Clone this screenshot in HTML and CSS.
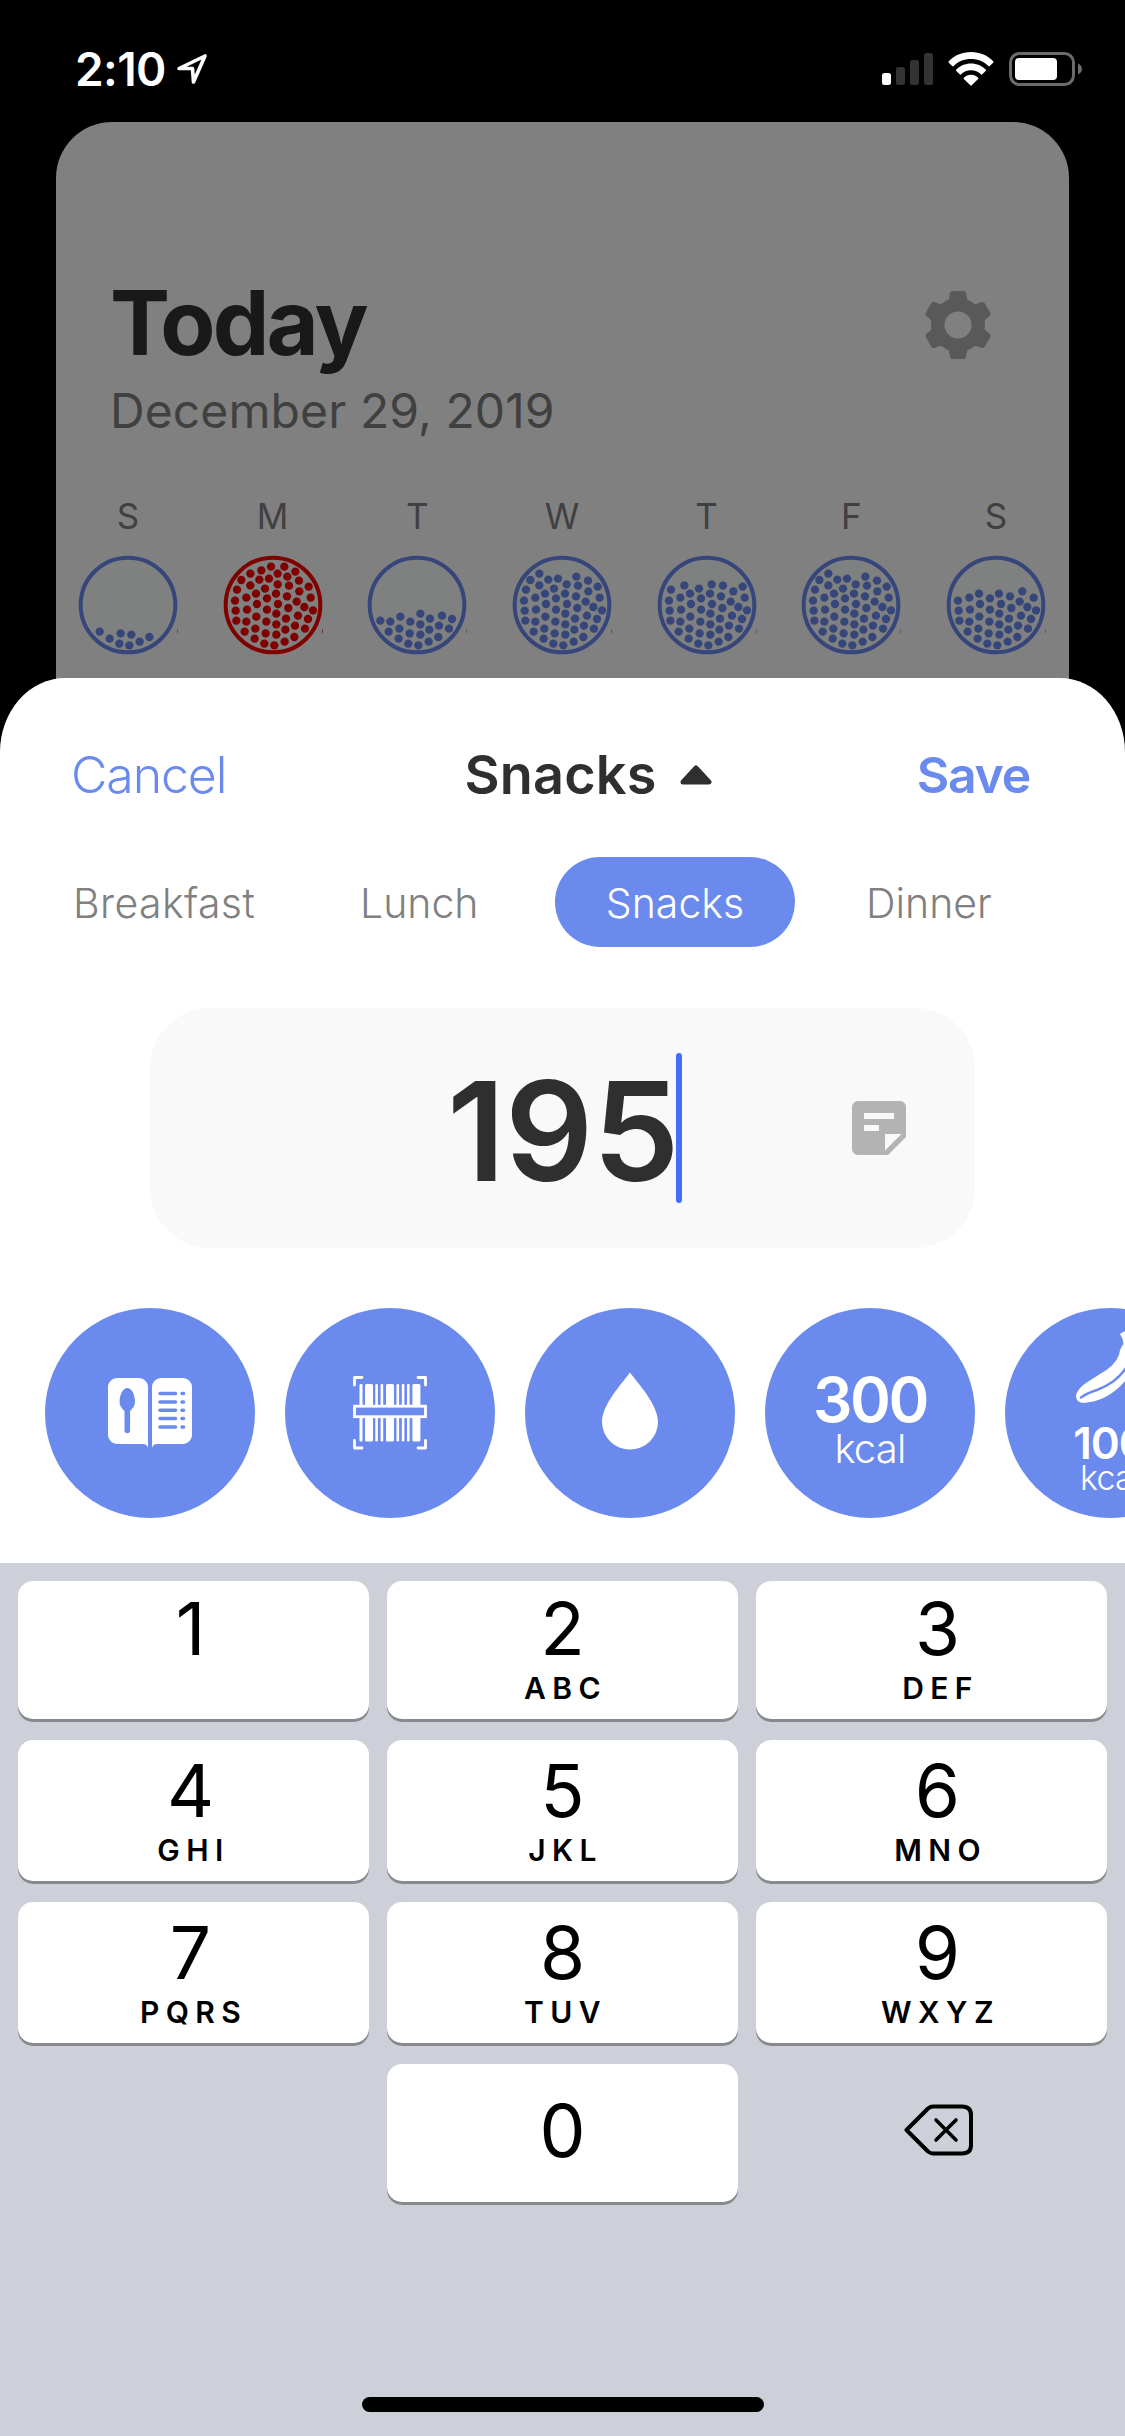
FILE: index.html
```html
<!DOCTYPE html>
<html lang="en">
<head>
<meta charset="utf-8">
<title>Add snack</title>
<link rel="stylesheet" href="styles.css">
</head>
<body>
<svg class="defs" aria-hidden="true">
  <defs>
    <g id="level-1">
      <circle cx="-85" cy="80" r="12.5"/><circle cx="-55" cy="101" r="12.5"/><circle cx="-22" cy="85" r="12.5"/><circle cx="10" cy="89" r="12.5"/><circle cx="64" cy="96" r="12.5"/><circle cx="35" cy="110" r="12.5"/><circle cx="-26" cy="116" r="12.5"/><circle cx="4" cy="121" r="12.5"/>
    </g>
    <g id="level-2">
      <use href="#level-1"/>
      <circle cx="-110" cy="47" r="12.5"/><circle cx="-80" cy="50" r="12.5"/><circle cx="-50" cy="35" r="12.5"/><circle cx="-20" cy="50" r="12.5"/><circle cx="10" cy="26" r="12.5"/><circle cx="39" cy="41" r="12.5"/><circle cx="75" cy="32" r="12.5"/><circle cx="105" cy="42" r="12.5"/><circle cx="10" cy="58" r="12.5"/><circle cx="66" cy="62" r="12.5"/><circle cx="96" cy="71" r="12.5"/><circle cx="37" cy="74" r="12.5"/><circle cx="-53" cy="71" r="12.5"/>
    </g>
    <g id="level-3">
      <use href="#level-2"/>
      <circle cx="-51" cy="-34" r="12.5"/><circle cx="9" cy="-34" r="12.5"/><circle cx="-80" cy="-22" r="12.5"/><circle cx="-18" cy="-20" r="12.5"/><circle cx="42" cy="-26" r="12.5"/><circle cx="113" cy="-22" r="12.5"/><circle cx="-114" cy="-13" r="12.5"/><circle cx="71" cy="-10" r="12.5"/><circle cx="-48" cy="-3" r="12.5"/><circle cx="15" cy="-3" r="12.5"/><circle cx="94" cy="6" r="12.5"/><circle cx="46" cy="9" r="12.5"/><circle cx="-112" cy="17" r="12.5"/><circle cx="-78" cy="14" r="12.5"/><circle cx="-18" cy="14" r="12.5"/><circle cx="120" cy="16" r="12.5"/><circle cx="79" cy="-41" r="12.5"/>
    </g>
    <g id="level-4">
      <use href="#level-3"/>
      <circle cx="-108" cy="-46" r="12.5"/><circle cx="-68" cy="-59" r="12.5"/><circle cx="-24" cy="-49" r="12.5"/><circle cx="14" cy="-62" r="12.5"/><circle cx="48" cy="-58" r="12.5"/><circle cx="107" cy="-55" r="12.5"/>
    </g>
    <g id="level-5">
      <use href="#level-4"/>
      <circle cx="-68" cy="-94" r="12.5"/><circle cx="-95" cy="-75" r="12.5"/><circle cx="-41" cy="-76" r="12.5"/><circle cx="-12" cy="-79" r="12.5"/><circle cx="43" cy="-85" r="12.5"/><circle cx="78" cy="-73" r="12.5"/>
    </g>
    <g id="level-6">
      <use href="#level-5"/>
      <circle cx="-6" cy="-115" r="12.5"/><circle cx="34" cy="-115" r="12.5"/><circle cx="-35" cy="-104" r="12.5"/><circle cx="67" cy="-100" r="12.5"/><circle cx="14" cy="-94" r="12.5"/>
    </g>
    <g id="ring">
      <circle class="ring-line" r="142"/>
      <path d="M147 73h2v11h-2z"/>
    </g>
    <path id="tooth" d="M-9.500-24-8-32Q-7.600-34-5.500-34H5.500Q7.600-34 8-32L9.500-24 13-18H-13Z"/>
  </defs>
</svg>

<header class="status">
  <div class="status-left">
    <span class="clock">2:10</span>
    <svg class="location" viewBox="0 0 32 32"><path d="M3 15.500 29 3 17.500 29 16.500 15.500Z" fill="none" stroke="#fff" stroke-width="3.600" stroke-linejoin="round"/></svg>
  </div>
  <div class="status-right">
    <svg width="51" height="34" viewBox="0 0 51 34"><rect x="0" y="21" width="9" height="12" rx="2.500" fill="#fff"/><g fill="#333"><rect x="14" y="15" width="9" height="18" rx="2.500"/><rect x="28" y="8" width="9" height="25" rx="2.500"/><rect x="42" y="1" width="9" height="32" rx="2.500"/></g></svg>
    <svg width="46" height="34" viewBox="0 0 46 34" fill="#fff"><path d="M23 0C14 0 6 3.500.8 9.300a1 1 0 0 0 0 1.400l3.400 3.400a1 1 0 0 0 1.400 0C10 9.500 16 7 23 7s13 2.500 17.400 7.100a1 1 0 0 0 1.400 0l3.400-3.400a1 1 0 0 0 0-1.400C40 3.500 32 0 23 0Z"/><path d="M23 11.500c-5.700 0-11 2.200-14.700 6a1 1 0 0 0 0 1.400l3.400 3.400a1 1 0 0 0 1.400 0c2.600-2.500 6-4 9.900-4s7.300 1.500 9.900 4a1 1 0 0 0 1.400 0l3.400-3.400a1 1 0 0 0 0-1.400c-3.700-3.800-9-6-14.700-6Z"/><path d="M23 22.800c-2.800 0-5.300 1.100-7.100 2.900a1 1 0 0 0 0 1.400l6.400 6.200a1 1 0 0 0 1.400 0l6.400-6.200a1 1 0 0 0 0-1.400c-1.800-1.800-4.300-2.900-7.100-2.900Z"/></svg>
    <svg width="73" height="34" viewBox="0 0 73 34"><rect x="1.500" y="1.500" width="63" height="31" rx="9" fill="none" stroke="#6b6b6b" stroke-width="3"/><rect x="6" y="6" width="42" height="22" rx="4" fill="#fff"/><path d="M69 11.500c2.500 1 4 3 4 5.500s-1.500 4.500-4 5.500Z" fill="#6b6b6b"/></svg>
  </div>
</header>

<section class="today">
  <div class="today-head">
    <div>
      <h1 class="today-title">Today</h1>
      <p class="today-date">December 29, 2019</p>
    </div>
    <svg class="gear" viewBox="-34 -34 68 68"><g fill="#595959"><circle r="27"/><use href="#tooth"/><use href="#tooth" transform="rotate(60)"/><use href="#tooth" transform="rotate(120)"/><use href="#tooth" transform="rotate(180)"/><use href="#tooth" transform="rotate(240)"/><use href="#tooth" transform="rotate(300)"/></g><circle r="13.500" fill="#808080"/></svg>
  </div>
  <div class="week">
    <div class="day"><span>S</span><svg viewBox="-150 -150 300 300"><use href="#ring"/><use href="#level-1"/></svg></div>
    <div class="day over"><span>M</span><svg viewBox="-150 -150 300 300"><use href="#ring"/><use href="#level-6"/></svg></div>
    <div class="day"><span>T</span><svg viewBox="-150 -150 300 300"><use href="#ring"/><use href="#level-2"/></svg></div>
    <div class="day"><span>W</span><svg viewBox="-150 -150 300 300"><use href="#ring"/><use href="#level-5"/></svg></div>
    <div class="day"><span>T</span><svg viewBox="-150 -150 300 300"><use href="#ring"/><use href="#level-4"/></svg></div>
    <div class="day"><span>F</span><svg viewBox="-150 -150 300 300"><use href="#ring"/><use href="#level-5"/></svg></div>
    <div class="day"><span>S</span><svg viewBox="-150 -150 300 300"><use href="#ring"/><use href="#level-3"/></svg></div>
  </div>
</section>

<main class="sheet">
  <nav class="sheet-bar">
    <span class="cancel">Cancel</span>
    <span class="meal">Snacks<svg width="34" height="20" viewBox="0 0 34 20"><path d="M4 17 17 3 30 17Z" fill="#2f2f2f" stroke="#2f2f2f" stroke-width="5" stroke-linejoin="round"/></svg></span>
    <span class="save">Save</span>
  </nav>
  <div class="tabs">
    <span class="tab tab-breakfast">Breakfast</span>
    <span class="tab tab-lunch">Lunch</span>
    <span class="tab tab-active">Snacks</span>
    <span class="tab tab-dinner">Dinner</span>
  </div>
  <div class="amount">
    <span class="amount-value">195</span>
    <span class="caret"></span>
    <svg class="note" viewBox="0 0 54 54"><path fill-rule="evenodd" fill="#b3b3b3" d="M6 0H48a6 6 0 0 1 6 6V36L36 54H6a6 6 0 0 1-6-6V6A6 6 0 0 1 6 0ZM12 12v6H42v-6ZM12 24v6H27v-6ZM33 33V49.500L49.500 33Z"/></svg>
  </div>
  <div class="quick">
    <div class="round">
      <svg width="84" height="72" viewBox="108 1377 84 72"><path fill="#fff" d="M117 1378h22a9 9 0 0 1 9 9v61q-1-4-5-4h-26a9 9 0 0 1-9-9v-48a9 9 0 0 1 9-9ZM161 1378h22a9 9 0 0 1 9 9v48a9 9 0 0 1-9 9h-26q-4 0-5 4v-61a9 9 0 0 1 9-9Z"/><path fill="#6b8aed" d="M127.300 1388c4.500 0 7.700 7 7.700 13.500 0 4.500-2.300 7-4.900 9.500v19.500a2.800 2.800 0 0 1-5.600 0V1411c-2.600-2.500-4.900-5-4.900-9.500 0-6.500 3.200-13.500 7.700-13.500Z"/><path stroke="#6b8aed" stroke-width="3.500" stroke-linecap="round" d="M160 1393.500h15.500M182 1393.500h1.500M160 1402h15.500M182 1402h1.500M160 1410.300h15.500M182 1410.300h1.500M160 1418.600h15.500M182 1418.600h1.500M160 1427h15.500M182 1427h1.500"/></svg>
    </div>
    <div class="round">
      <svg width="76" height="76" viewBox="352 1376 76 76"><g fill="#fff"><rect x="359.500" y="1385" width="3" height="57.500" rx="1"/><rect x="365" y="1385" width="8" height="57.500" rx="1.500"/><rect x="375.300" y="1385" width="2.600" height="57.500" rx="1"/><rect x="380.600" y="1385" width="2.600" height="57.500" rx="1"/><rect x="386" y="1385" width="8" height="57.500" rx="1.500"/><rect x="396.500" y="1385" width="2.600" height="57.500" rx="1"/><rect x="401.800" y="1385" width="2.600" height="57.500" rx="1"/><rect x="407" y="1385" width="2.600" height="57.500" rx="1"/><rect x="412.400" y="1385" width="8" height="57.500" rx="1.500"/></g><rect x="354.500" y="1407.200" width="71" height="10.500" fill="#6b8aed" stroke="#fff" stroke-width="2.800"/><path fill="none" stroke="#fff" stroke-width="2.800" stroke-linecap="round" stroke-linejoin="round" d="M354.500 1386v-7.500h7.500M418 1378.500h7.500v7.500M425.500 1441.500v7.500h-7.500M362 1449h-7.500v-7.500"/></svg>
    </div>
    <div class="round">
      <svg class="drop" width="56" height="78" viewBox="602 1371.500 56 78"><path fill="#fff" d="M630 1372C638 1383 658 1404 658 1421.500a28 27.500 0 0 1-56 0C602 1404 622 1383 630 1372Z"/></svg>
    </div>
    <div class="round preset">
      <strong>300</strong><span>kcal</span>
    </div>
    <div class="round preset small">
      <svg width="76" height="76" viewBox="1072 1328 76 76"><path fill="#fff" d="M1120 1334Q1124 1331 1131 1329L1136 1341Q1142 1362 1127 1379Q1108 1402 1083 1403Q1076 1402 1076 1396Q1077 1389 1086 1383L1100 1374Q1115 1366 1119 1355Q1120 1348 1123.500 1344Q1123 1338 1120 1334Z"/><path fill="none" stroke="#6b8aed" stroke-width="2.500" stroke-linecap="round" d="M1081 1397.500Q1087 1393 1097 1390Q1119 1382 1129 1363"/></svg>
      <strong>100</strong><span>kcal</span>
    </div>
  </div>
</main>

<section class="keyboard">
  <div class="keys">
    <div class="key left"><b>1</b></div>
    <div class="key"><b>2</b><i>ABC</i></div>
    <div class="key right"><b>3</b><i>DEF</i></div>
    <div class="key left low"><b>4</b><i>GHI</i></div>
    <div class="key low"><b>5</b><i>JKL</i></div>
    <div class="key right low"><b>6</b><i>MNO</i></div>
    <div class="key left low"><b>7</b><i>PQRS</i></div>
    <div class="key low"><b>8</b><i>TUV</i></div>
    <div class="key right low"><b>9</b><i>WXYZ</i></div>
    <div class="key zero"><b>0</b></div>
    <div class="erase"><svg width="70" height="52" viewBox="0 0 70 52" fill="none" stroke="#000" stroke-linecap="round" stroke-linejoin="round"><path stroke-width="4" d="M2.500 26 24 4.500Q26.500 2.500 29 2.500H58Q67 2.500 67 11V41Q67 49.500 58 49.500H29Q26.500 49.500 24 47.500Z"/><path stroke-width="3.600" d="M32 16 52 36M52 16 32 36"/></svg></div>
  </div>
  <div class="home"></div>
</section>
</body>
</html>
```
FILE: styles.css
```css
* { box-sizing: border-box; margin: 0; padding: 0; }
body {
  width: 1125px;
  height: 2436px;
  overflow: hidden;
  display: flex;
  flex-direction: column;
  background: #000;
  font-family: Inter, "Liberation Sans", sans-serif;
  white-space: nowrap;
}
svg { display: block; flex: none; }
.defs { display: none; }

.status {
  height: 122px;
  flex: none;
  display: flex;
  justify-content: space-between;
  padding: 52px 43px 0 75px;
}
.status-left, .status-right { display: flex; height: 34px; align-items: center; }
.clock { color: #fff; font-size: 46px; font-weight: 600; line-height: 34px; letter-spacing: -0.6px; }
.location { width: 32px; height: 32px; margin-left: 10px; }
.status-right { gap: 15px; }

.today {
  height: 640px;
  flex: none;
  margin: 0 56px;
  background: #808080;
  border-radius: 56px 56px 0 0;
}
.today-head {
  display: flex;
  justify-content: space-between;
  padding: 156px 77px 0 54px;
}
.today-title { font-size: 90px; line-height: 90px; font-weight: 700; color: #191919; letter-spacing: -2.8px; }
.today-date { margin-top: 15px; font-size: 48px; line-height: 56px; color: #404040; font-weight: 440; letter-spacing: 0.1px; }
.gear { width: 68px; height: 68px; margin-top: 13px; }
.week { display: flex; justify-content: space-between; padding: 52px 0 0; margin: 0 23px 0 22px; }
.day { width: 100px; display: flex; flex-direction: column; align-items: center; color: #37467a; fill: #37467a; }
.day span { font-size: 35px; line-height: 50px; color: #404040; font-weight: 440; }
.day svg { width: 100px; height: 100px; margin-top: 14px; overflow: visible; }
.over { color: #800000; fill: #800000; }
.ring-line { fill: #7e8180; stroke: currentColor; stroke-width: 12; }

.sheet {
  position: relative;
  height: 885px;
  flex: none;
  margin-top: -84px;
  background: #fff;
  border-radius: 65px 65px 0 0 / 74px 74px 0 0;
  overflow: hidden;
}
.sheet-bar {
  height: 193px;
  padding: 0 95px 0 71px;
  display: grid;
  grid-template-columns: 1fr auto 1fr;
  align-items: center;
  color: #6b8aed;
  font-size: 50px;
  line-height: 60px;
}
.cancel { font-weight: 330; letter-spacing: -1.1px; }
.meal { display: flex; align-items: center; gap: 22px; padding-left: 76px; color: #2f2f2f; font-size: 54px; font-weight: 600; letter-spacing: 0.2px; }
.save { font-weight: 600; text-align: right; letter-spacing: -1.3px; }
.tabs { display: flex; margin-top: -14px; height: 90px; padding-left: 73px; line-height: 92px; font-size: 41px; font-weight: 330; color: #808080; }
.tab-breakfast { width: 287px; letter-spacing: 0.4px; }
.tab-lunch { width: 195px; }
.tab-active { width: 240px; border-radius: 45px; background: #6b8aed; color: #fff; text-align: center; }
.tab-dinner { margin-left: 71px; }
.amount {
  width: 825px;
  height: 240px;
  margin: 61px auto 0;
  border-radius: 60px;
  background: #f9f9f9;
  display: flex;
  align-items: center;
  padding-right: 69px;
}
.amount-value { width: 526px; padding-top: 5px; text-align: right; font-size: 138px; font-weight: 600; line-height: 235px; color: #2f2f2f; letter-spacing: -0.5px; text-indent: 0; margin-right: -3px; padding-left: 3px; width: 529px; }
.caret { width: 6px; height: 150px; border-radius: 3px; background: #446ef5; }
.note { width: 54px; height: 54px; margin-left: auto; }
.quick { display: flex; gap: 30px; padding-left: 45px; margin-top: 60px; }
.round {
  width: 210px;
  height: 210px;
  flex: none;
  border-radius: 50%;
  background: #6b8aed;
  color: #fff;
  display: flex;
  flex-direction: column;
  align-items: center;
  justify-content: center;
}
.drop { margin-bottom: 5px; }
.preset { justify-content: flex-start; }
.preset strong { margin-top: 67px; font-size: 62px; line-height: 50px; font-weight: 600; letter-spacing: -2.4px; }
.preset span { font-size: 40px; line-height: 36px; font-weight: 330; margin-top: 6px; letter-spacing: -0.8px; }
.small svg { margin-top: 20px; }
.small strong { margin-top: 22px; font-size: 44px; line-height: 34px; letter-spacing: -1px; }
.small span { font-size: 34px; line-height: 30px; margin-top: 3px; }

.keyboard { flex: 1; background: #cdd0d8; display: flex; flex-direction: column; padding: 18px 18px 24px; }
.keys { display: grid; grid-template-columns: repeat(3, 351px); grid-template-rows: 138px 141px 141px 138px; row-gap: 21px; column-gap: 18px; }
.key {
  background: #fff;
  border-radius: 15px;
  box-shadow: 0 3px 0 #88898d;
  display: flex;
  flex-direction: column;
  align-items: center;
  padding-top: 10px;
}
.low { padding-top: 13px; }
.key b { font-size: 73px; line-height: 75px; font-weight: 400; }
.key i { font-size: 30px; line-height: 30px; font-weight: 600; font-style: normal; letter-spacing: 6.4px; margin: 7px -6px 0 0; }
.left { padding-right: 6px; }
.right { padding-left: 12px; }
.zero { grid-column: 2; padding-top: 29px; }
.erase { display: flex; align-items: center; justify-content: center; padding: 0 0 6px 14px; }
.home { width: 402px; height: 15px; border-radius: 8px; background: #000; margin: auto auto 0; }
```
